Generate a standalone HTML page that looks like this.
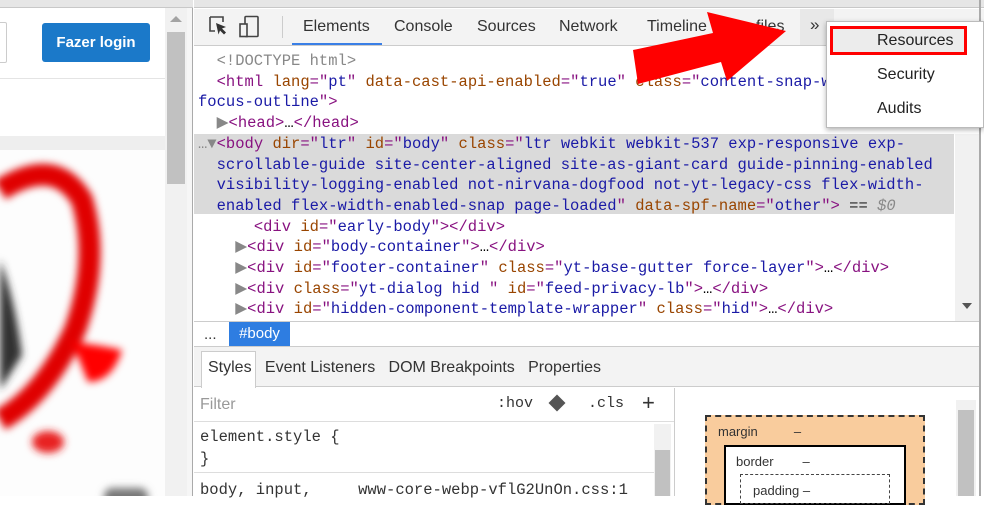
<!DOCTYPE html>
<html><head><meta charset="utf-8"><style>
*{margin:0;padding:0;box-sizing:border-box}
body{width:984px;height:496px;overflow:hidden;background:#fff;position:relative;font-family:"Liberation Sans",sans-serif}
.a{position:absolute}
.mono{font-family:"Liberation Mono",monospace;font-size:15.5px;white-space:pre;line-height:20.7px}
.t{color:#881280}.n{color:#994500}.v{color:#1a1aa6}.g{color:#888}.k{color:#222}
.tab{position:absolute;top:18px;font-size:16px;color:#333}
</style></head><body>
<!-- left page -->
<div class="a" style="left:0;top:0;width:193px;height:8px;background:#e6e6e6;border-bottom:1px solid #c8c8c8"></div>
<div class="a" style="left:-10px;top:22px;width:17px;height:41px;border:1px solid #ccc;border-radius:2px"></div>
<div class="a" style="left:42px;top:23px;width:108px;height:39px;background:#1b79c9;border-radius:3px;color:#fff;font-weight:bold;font-size:15px;line-height:39px;text-align:center">Fazer login</div>
<div class="a" style="left:0;top:78px;width:165px;height:1px;background:#e4e4e4"></div>
<div class="a" style="left:0;top:136px;width:165px;height:14px;background:#eee"></div>
<div class="a" style="left:0;top:150px;width:165px;height:346px;background:#fdfdfd"></div>
<svg class="a" style="left:0;top:150px" width="165" height="346">
<defs><filter id="bl"><feGaussianBlur stdDeviation="4"/></filter></defs>
<g filter="url(#bl)">
<path d="M0 40 Q55 5 82 50 Q100 110 75 180 Q45 245 0 270" fill="none" stroke="#e00000" stroke-width="22"/>
<path d="M0 110 Q15 150 22 205 L0 240Z" fill="#333"/>
<path d="M72 192 Q100 195 122 200 Q112 232 88 232Z" fill="#f00"/>
<ellipse cx="48" cy="292" rx="16" ry="11" fill="#e82020"/>
<rect x="104" y="338" width="44" height="20" rx="8" fill="#777"/>
</g></svg>
<div class="a" style="left:165px;top:8px;width:22px;height:488px;background:#f1f1f1"></div>
<div class="a" style="left:167px;top:32px;width:18px;height:152px;background:#c1c1c1"></div>
<div class="a" style="left:170px;top:16px;width:0;height:0;border-left:6px solid transparent;border-right:6px solid transparent;border-bottom:6px solid #a3a3a3"></div>
<div class="a" style="left:187px;top:8px;width:6px;height:488px;background:#f6f6f6;border-right:1px solid #aaa"></div>
<!-- devtools toolbar -->
<div class="a" style="left:194px;top:0;width:790px;height:8px;background:#e6e6e6;border-bottom:1px solid #c8c8c8"></div>
<div class="a" style="left:194px;top:9px;width:790px;height:37px;background:#f3f3f3;border-bottom:1px solid #ccc"></div>
<svg class="a" style="left:205px;top:15px" width="60" height="24">
<path d="M5 2h13v5M5 2v14h5" fill="none" stroke="#444" stroke-width="1.6"/>
<path d="M11 8l10 4-4 1.5 4 4-2 2-4-4-1.5 4z" fill="#333"/>
<rect x="40" y="1.5" width="13" height="20" rx="1" fill="none" stroke="#444" stroke-width="1.6"/>
<rect x="35" y="9" width="7" height="12.5" fill="#f3f3f3" stroke="#444" stroke-width="1.6"/>
</svg>
<div class="a" style="left:282px;top:16px;width:1px;height:22px;background:#ccc"></div>
<div class="tab" style="left:303px">Elements</div>
<div class="a" style="left:292px;top:43px;width:90px;height:2px;background:#3a7fe6"></div>
<div class="tab" style="left:394px">Console</div>
<div class="tab" style="left:477px">Sources</div>
<div class="tab" style="left:559px">Network</div>
<div class="tab" style="left:647px">Timeline</div>
<div class="tab" style="left:756px">files</div>
<div class="a" style="left:800px;top:9px;width:34px;height:36px;background:#e8e8e8"></div>
<div class="tab" style="left:810px;top:15px;font-size:17px">»</div>
<!-- elements code -->
<div class="a" style="left:194px;top:134px;width:760px;height:80px;background:#dadada"></div>
<div class="a mono" style="left:198px;top:51px"><span class="g">  &lt;!DOCTYPE html&gt;</span>
  <span class="t">&lt;html</span> <span class="n">lang</span><span class="t">="</span><span class="v">pt</span><span class="t">"</span> <span class="n">data-cast-api-enabled</span><span class="t">="</span><span class="v">true</span><span class="t">"</span> <span class="n">class</span><span class="t">="</span><span class="v">content-snap-w</span>
<span class="v">focus-outline</span><span class="t">"&gt;</span>
<span class="g">  ▶</span><span class="t">&lt;head&gt;</span>…<span class="t">&lt;/head&gt;</span>
<span class="g">…▼</span><span class="t">&lt;body</span> <span class="n">dir</span><span class="t">="</span><span class="v">ltr</span><span class="t">"</span> <span class="n">id</span><span class="t">="</span><span class="v">body</span><span class="t">"</span> <span class="n">class</span><span class="t">="</span><span class="v">ltr webkit webkit-537 exp-responsive exp-</span>
<span class="v">  scrollable-guide site-center-aligned site-as-giant-card guide-pinning-enabled</span>
<span class="v">  visibility-logging-enabled not-nirvana-dogfood not-yt-legacy-css flex-width-</span>
<span class="v">  enabled flex-width-enabled-snap page-loaded</span><span class="t">"</span> <span class="n">data-spf-name</span><span class="t">="</span><span class="v">other</span><span class="t">"&gt;</span> <span class="k">==</span> <span class="g"><i>$0</i></span>
      <span class="t">&lt;div</span> <span class="n">id</span><span class="t">="</span><span class="v">early-body</span><span class="t">"&gt;&lt;/div&gt;</span>
<span class="g">    ▶</span><span class="t">&lt;div</span> <span class="n">id</span><span class="t">="</span><span class="v">body-container</span><span class="t">"&gt;</span>…<span class="t">&lt;/div&gt;</span>
<span class="g">    ▶</span><span class="t">&lt;div</span> <span class="n">id</span><span class="t">="</span><span class="v">footer-container</span><span class="t">"</span> <span class="n">class</span><span class="t">="</span><span class="v">yt-base-gutter force-layer</span><span class="t">"&gt;</span>…<span class="t">&lt;/div&gt;</span>
<span class="g">    ▶</span><span class="t">&lt;div</span> <span class="n">class</span><span class="t">="</span><span class="v">yt-dialog hid </span><span class="t">"</span> <span class="n">id</span><span class="t">="</span><span class="v">feed-privacy-lb</span><span class="t">"&gt;</span>…<span class="t">&lt;/div&gt;</span>
<span class="g">    ▶</span><span class="t">&lt;div</span> <span class="n">id</span><span class="t">="</span><span class="v">hidden-component-template-wrapper</span><span class="t">"</span> <span class="n">class</span><span class="t">="</span><span class="v">hid</span><span class="t">"&gt;</span>…<span class="t">&lt;/div&gt;</span></div>
<div class="a" style="left:955px;top:134px;width:24px;height:188px;background:#f1f1f1"></div>
<div class="a" style="left:962px;top:303px;width:0;height:0;border-left:5px solid transparent;border-right:5px solid transparent;border-top:6px solid #555"></div>
<div class="a" style="left:979px;top:0;width:2px;height:496px;background:#aaa"></div>
<!-- breadcrumb -->
<div class="a" style="left:194px;top:321px;width:785px;height:26px;background:#fff;border-top:1px solid #ccc;border-bottom:1px solid #ccc"></div>
<div class="a" style="left:204px;top:326px;font-size:15px;color:#333">...</div>
<div class="a" style="left:229px;top:322px;width:61px;height:24px;background:#2e7de1;color:#fff;font-size:15px;line-height:24px;text-align:center">#body</div>
<!-- styles tabs -->
<div class="a" style="left:194px;top:347px;width:785px;height:40px;background:#f3f3f3;border-bottom:1px solid #ccc"></div>
<div class="a" style="left:201px;top:351px;width:55px;height:37px;background:#fff;border:1px solid #ccc;border-bottom:none"></div>
<div class="a" style="left:208px;top:359px;font-size:16px;color:#333;white-space:pre">Styles   Event Listeners   DOM Breakpoints   Properties</div>
<!-- filter -->
<div class="a" style="left:194px;top:388px;width:480px;height:34px;background:#fff;border-bottom:1px solid #ddd"></div>
<div class="a" style="left:200px;top:396px;font-size:16px;color:#999">Filter</div>
<div class="a mono" style="left:497px;top:394px;color:#333;font-size:15px">:hov</div>
<div class="a" style="left:551px;top:397px;width:12px;height:12px;background:#555;transform:rotate(45deg)"></div>
<div class="a mono" style="left:588px;top:394px;color:#333;font-size:15px">.cls</div>
<div class="a" style="left:642px;top:390px;font-size:22px;color:#333">+</div>
<div class="a" style="left:674px;top:388px;width:1px;height:108px;background:#ccc"></div>
<div class="a mono" style="left:200px;top:426px;color:#333;line-height:22px">element.style {
}</div>
<div class="a" style="left:194px;top:472px;width:460px;height:1px;background:#ddd"></div>
<div class="a mono" style="left:200px;top:480px;color:#333">body, input,     www-core-webp-vflG2UnOn.css:1</div>
<div class="a" style="left:654px;top:424px;width:17px;height:72px;background:#f1f1f1"></div>
<div class="a" style="left:655px;top:450px;width:15px;height:46px;background:#c1c1c1"></div>
<!-- box model -->
<div class="a" style="left:705px;top:415px;width:220px;height:90px;background:#f9cc9d;border:2px dashed #333"></div>
<div class="a" style="left:718px;top:424px;font-size:13px;color:#333;white-space:pre">margin          –</div>
<div class="a" style="left:724px;top:445px;width:182px;height:60px;background:#fff;border:2px solid #000"></div>
<div class="a" style="left:736px;top:454px;font-size:13px;color:#333;white-space:pre">border        –</div>
<div class="a" style="left:740px;top:474px;width:150px;height:30px;border:1px dashed #444"></div>
<div class="a" style="left:753px;top:483px;font-size:13px;color:#333">padding –</div>
<div class="a" style="left:956px;top:400px;width:20px;height:96px;background:#f1f1f1"></div>
<div class="a" style="left:958px;top:410px;width:16px;height:86px;background:#c1c1c1"></div>
<!-- arrow -->
<svg class="a" style="left:0;top:0" width="984" height="496"><polygon points="633,50 713,33 707,12 786,31 727,81 721,62 638,84" fill="#ff0000"/></svg>
<!-- menu -->
<div class="a" style="left:826px;top:21px;width:158px;height:107px;background:#fff;border:1px solid #bbb;box-shadow:0 2px 5px rgba(0,0,0,.3)"></div>
<div class="a" style="left:830px;top:26px;width:137px;height:29px;background:#ececec;border:3px solid #f00"></div>
<div class="a" style="left:877px;top:32px;font-size:16px;color:#222">Resources</div>
<div class="a" style="left:877px;top:66px;font-size:16px;color:#222">Security</div>
<div class="a" style="left:877px;top:100px;font-size:16px;color:#222">Audits</div>
</body></html>
